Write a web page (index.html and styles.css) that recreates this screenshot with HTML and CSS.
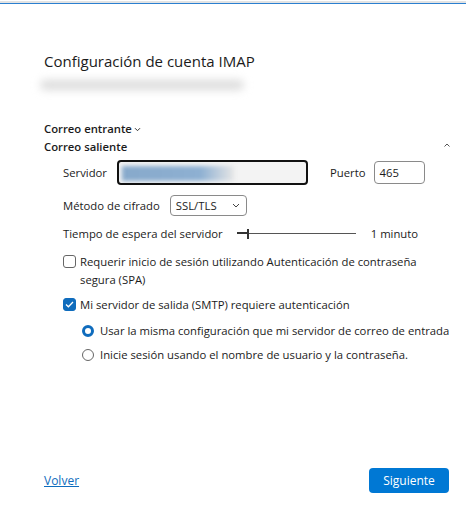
FILE: index.html
```html
<!DOCTYPE html>
<html lang="es">
<head>
    <meta charset="UTF-8">
    <title>Configuración de cuenta IMAP</title>
    <link rel="stylesheet" href="styles.css">
</head>
<body>
    <div class="window">
        <div class="content">
            <h1>Configuración de cuenta IMAP</h1>
            <div class="email-blur"></div>

            <!-- Incoming section (collapsed) -->
            <div class="section-title first">Correo entrante<svg class="chev-down" width="7" height="5" viewBox="0 0 7 5"><path d="M1 1.2 L3.5 3.7 L6 1.2" fill="none" stroke="#333" stroke-width="1"/></svg></div>

            <!-- Outgoing section -->
            <div class="section-head">
                <div class="section-title">Correo saliente</div>
                <svg class="chev-up" width="8" height="6" viewBox="0 0 8 6"><path d="M1.5 4.5 L4 2 L6.5 4.5" fill="none" stroke="#555" stroke-width="1"/></svg>
            </div>

            <div class="section-body">
                <div class="row">
                    <span class="lbl">Servidor</span>
                    <div class="server-input"><div class="server-blur"></div></div>
                    <span class="lbl port-lbl">Puerto</span>
                    <div class="port-input">465</div>
                </div>

                <div class="row">
                    <span class="lbl">Método de cifrado</span>
                    <div class="select">SSL/TLS
                        <svg width="8" height="5" viewBox="0 0 8 5"><path d="M1 1 L4 4 L7 1" fill="none" stroke="#444" stroke-width="1"/></svg>
                    </div>
                </div>

                <div class="row">
                    <span class="lbl">Tiempo de espera del servidor</span>
                    <div class="slider">
                        <div class="slider-fill"></div>
                        <div class="slider-thumb"></div>
                    </div>
                    <span class="lbl">1 minuto</span>
                </div>

                <label class="check">
                    <span class="box"></span>
                    <span>Requerir inicio de sesión utilizando Autenticación de contraseña segura (SPA)</span>
                </label>

                <label class="check">
                    <span class="box checked">
                        <svg width="9" height="7" viewBox="0 0 9 7"><path d="M1 3.5 L3.4 5.8 L8 1" fill="none" stroke="#fff" stroke-width="1.3"/></svg>
                    </span>
                    <span>Mi servidor de salida (SMTP) requiere autenticación</span>
                </label>

                <div class="radios">
                    <label class="radio">
                        <span class="dot on"></span>
                        <span>Usar la misma configuración que mi servidor de correo de entrada</span>
                    </label>
                    <label class="radio">
                        <span class="dot"></span>
                        <span>Inicie sesión usando el nombre de usuario y la contraseña.</span>
                    </label>
                </div>
            </div>
        </div>

        <div class="footer">
            <a href="#" class="back">Volver</a>
            <button class="next">Siguiente</button>
        </div>
    </div>
</body>
</html>
```

FILE: styles.css
```css
* {
    margin: 0;
    padding: 0;
    box-sizing: border-box;
}

body {
    font-family: 'Open Sans', 'Noto Sans', sans-serif;
    font-size: 11.3px;
    color: #1b1b1b;
    background: #fff;
    width: 466px;
    height: 527px;
    overflow: hidden;
}

.window {
    height: 527px;
    border-top: 2px solid #e3e3e3;
    margin-top: 1px;
    box-shadow: inset 0 1px 0 #2b7fd0;
    display: flex;
    flex-direction: column;
}

.content {
    padding: 47px 12px 0 44px;
    flex: 1;
}

h1 {
    font-size: 15px;
    font-weight: 400;
    line-height: 22px;
    color: #1b1b1b;
}

.email-blur {
    width: 204px;
    height: 10px;
    margin: 8px 0 0 -4px;
    background: #dcdcdc;
    border-radius: 5px;
    filter: blur(4px);
}

.section-title {
    font-weight: 600;
    line-height: 16px;
    margin-top: 2px;
}

.section-title.first {
    margin-top: 31px;
}

.chev-down {
    margin-left: 2px;
    vertical-align: 1px;
}

.section-head {
    display: flex;
    justify-content: space-between;
    align-items: center;
}

.chev-up {
    margin-right: 3px;
    margin-top: -3px;
}

.section-body {
    padding-left: 19px;
}

.row {
    display: flex;
    align-items: center;
    gap: 10px;
    margin-top: 10px;
}

.row:first-child {
    margin-top: 5px;
}

.server-input {
    width: 191px;
    height: 25px;
    border: 2px solid #111;
    border-radius: 4px;
    background: #f3f3f3;
    overflow: hidden;
    padding: 4px 3px;
}

.server-blur {
    width: 112px;
    height: 15px;
    background: linear-gradient(90deg, #87a9cb, #8eb0d2 70%, #e6e6e6);
    filter: blur(2px);
}

.port-lbl {
    margin-left: 12px;
}

.port-input {
    width: 51px;
    height: 23px;
    border: 1px solid #8a8a8a;
    border-radius: 4px;
    padding: 1px 5px;
    line-height: 19px;
    margin-left: -2px;
}

.select {
    width: 77px;
    height: 21px;
    border: 1px solid #8a8a8a;
    border-radius: 4px;
    display: flex;
    justify-content: space-between;
    align-items: center;
    padding: 0 6px 0 5px;
}

.slider {
    position: relative;
    width: 119px;
    height: 12px;
    margin-left: 4px;
    margin-right: 5px;
    background: linear-gradient(#555, #555) no-repeat 0 5px / 100% 1px;
}

.slider-fill {
    position: absolute;
    left: 0;
    top: 4px;
    width: 11px;
    height: 2px;
    background: #333;
}

.slider-thumb {
    position: absolute;
    left: 10px;
    top: 1px;
    width: 2px;
    height: 10px;
    background: #333;
}

.check {
    display: flex;
    align-items: flex-start;
    gap: 4px;
    margin-top: 12px;
    line-height: 18px;
    padding-right: 20px;
}

.check + .check {
    margin-top: 7px;
}

.box {
    flex: none;
    width: 13px;
    height: 13px;
    border: 1px solid #666;
    border-radius: 3px;
    margin-top: 2px;
    display: flex;
    align-items: center;
    justify-content: center;
}

.box.checked {
    background: #0f6cbd;
    border-color: #0f6cbd;
}

.radios {
    padding-left: 19px;
}

.radio {
    display: flex;
    align-items: center;
    gap: 6px;
    margin-top: 5px;
    line-height: 19px;
    white-space: nowrap;
}

.radio:first-child {
    margin-top: 7px;
}

.dot {
    flex: none;
    width: 12px;
    height: 12px;
    border: 1px solid #666;
    border-radius: 50%;
}

.dot.on {
    border: 3.5px solid #0f6cbd;
}

.footer {
    display: flex;
    justify-content: space-between;
    align-items: center;
    padding: 0 17px 35px 44px;
}

.back {
    color: #0f6cbd;
    font-size: 12px;
}

.next {
    width: 80px;
    height: 25px;
    background: #0078d4;
    color: #fff;
    border: none;
    border-radius: 4px;
    font-family: inherit;
    font-size: 12px;
}
```
